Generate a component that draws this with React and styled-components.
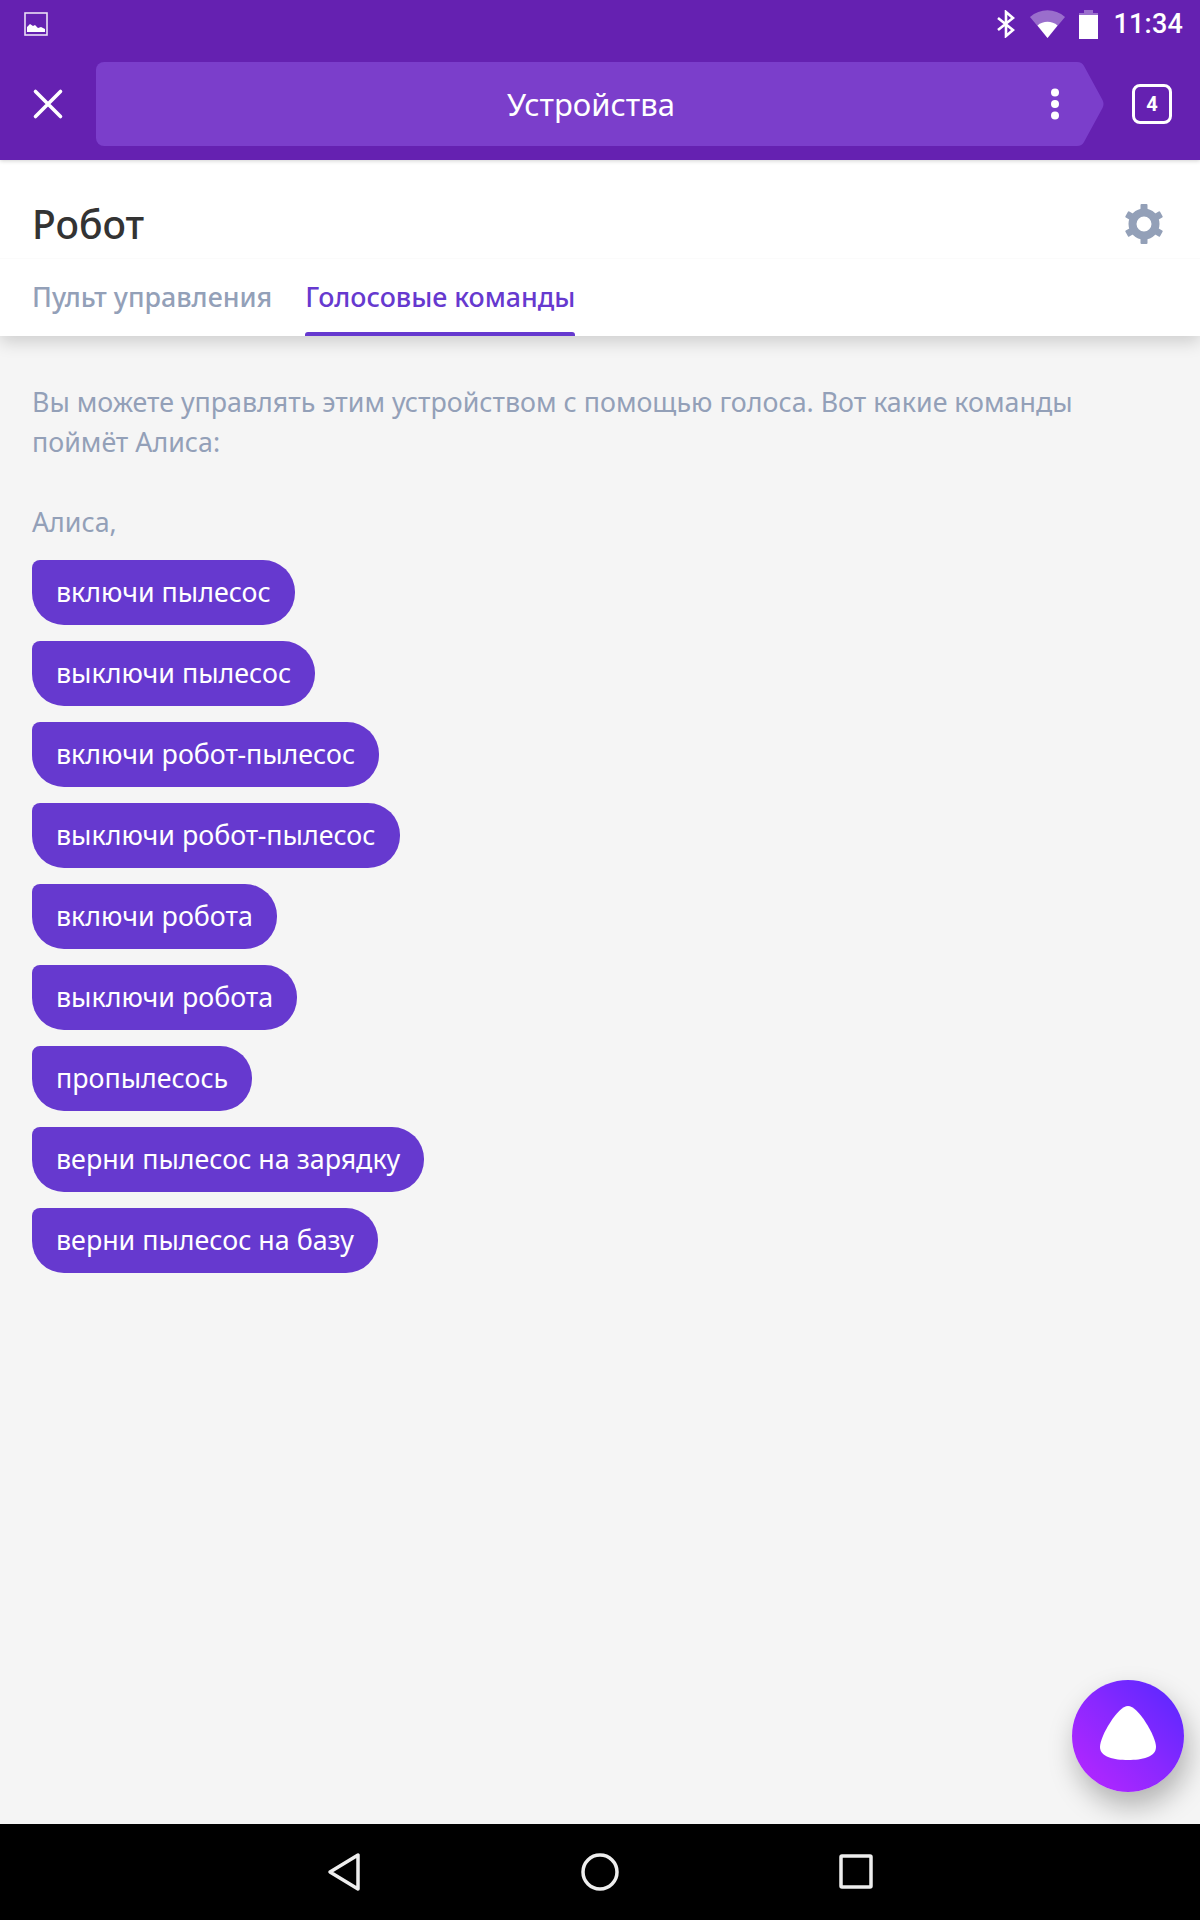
import styled, { createGlobalStyle } from "styled-components";

const GlobalStyle = createGlobalStyle`
  html, body {
    margin: 0;
    padding: 0;
    background: #f5f5f5;
  }
  * {
    box-sizing: border-box;
  }
`;

const Screen = styled.div`
  width: 1200px;
  height: 1920px;
  display: flex;
  flex-direction: column;
  font-family: "Noto Sans", "Open Sans", sans-serif;
  overflow: hidden;
`;

const Header = styled.header`
  height: 160px;
  flex-shrink: 0;
  background: #6521b1;
  display: flex;
  flex-direction: column;
  position: relative;
  z-index: 2;
  box-shadow: 0 1px 4px rgba(0, 0, 0, 0.18);
`;

const StatusBar = styled.div`
  height: 62px;
  padding: 10px 17px 0 24px;
  display: flex;
  align-items: flex-start;
  color: #fff;
`;

const StatusIcons = styled.div`
  margin-left: auto;
  display: flex;
  align-items: flex-start;
`;

const StatusIcon = styled.svg`
  display: block;
  margin-right: ${(props) => props.$gap || 0}px;
`;

const Time = styled.span`
  font-family: Roboto, sans-serif;
  font-size: 27px;
  font-weight: 500;
  line-height: 28px;
  letter-spacing: 0.2px;
`;

const Toolbar = styled.div`
  height: 84px;
  display: flex;
  align-items: center;
`;

const CloseButton = styled.div`
  width: 96px;
  height: 84px;
  display: flex;
  align-items: center;
  padding-left: 32px;
`;

const AddressBar = styled.div`
  flex: 1;
  height: 84px;
  padding-right: 14px;
  background: #7b3ecb;
  border-radius: 8px 0 0 8px;
  display: flex;
  align-items: center;
  justify-content: flex-end;
  position: relative;
`;

const AddressTitle = styled.div`
  position: absolute;
  left: 12px;
  right: 0;
  text-align: center;
  color: #fff;
  font-size: 31px;
  line-height: 84px;
`;

const TabCounter = styled.div`
  width: 40px;
  height: 40px;
  margin: 0 28px 0 28px;
  border: 3px solid #fff;
  border-radius: 8px;
  color: #fff;
  font-family: Roboto, sans-serif;
  font-size: 20px;
  font-weight: 700;
  display: flex;
  align-items: center;
  justify-content: center;
`;

const Panel = styled.section`
  height: 176px;
  flex-shrink: 0;
  background: #fff;
  box-shadow: 0 6px 16px rgba(0, 0, 0, 0.16);
  position: relative;
  z-index: 1;
`;

const TitleRow = styled.div`
  height: 99px;
  padding: 29px 36px 0 32px;
  display: flex;
  align-items: center;
  justify-content: space-between;
  border-bottom: 1px solid #fbfbfb;
`;

const Title = styled.h1`
  margin: 0;
  color: #333;
  font-size: 39px;
  font-weight: 500;
  line-height: 44px;
`;

const Tabs = styled.div`
  display: flex;
  gap: 33px;
  padding-left: 32px;
  height: 77px;
`;

const Tab = styled.div`
  height: 77px;
  padding-top: 20px;
  font-size: 26.8px;
  font-weight: 500;
  line-height: 36px;
  color: ${(props) => (props.$active ? "#6639cf" : "#93a0b8")};
  position: relative;

  &::after {
    content: "";
    display: ${(props) => (props.$active ? "block" : "none")};
    position: absolute;
    left: 0;
    right: 0;
    bottom: 0;
    height: 4px;
    background: #6639cf;
    border-radius: 3px 3px 0 0;
  }
`;

const Content = styled.main`
  flex: 1;
  background: #f5f5f5;
  padding: 46px 32px 0;
  position: relative;
`;

const Hint = styled.p`
  margin: 0;
  color: #93a0b8;
  font-size: 26.8px;
  line-height: 40px;
`;

const Lead = styled(Hint)`
  margin-top: 40px;
`;

const Commands = styled.div`
  margin-top: 18px;
  display: flex;
  flex-direction: column;
  align-items: flex-start;
  gap: 16px;
`;

const Command = styled.div`
  height: 65px;
  padding: 0 24px;
  background: #6639cf;
  color: #fff;
  font-size: 26.8px;
  line-height: 63px;
  border-radius: 8px 32px 32px 32px;
  white-space: nowrap;
`;

const AliceButton = styled.div`
  position: absolute;
  right: 16px;
  bottom: 32px;
  width: 112px;
  height: 112px;
  border-radius: 50%;
  background: linear-gradient(225deg, #5428ff 0%, #8a28ff 50%, #bb26ff 100%);
  box-shadow: 4px 14px 28px rgba(0, 0, 0, 0.28);
`;

const NavBar = styled.nav`
  height: 96px;
  flex-shrink: 0;
  background: #000;
  display: flex;
  justify-content: center;
  padding-top: 28px;
`;

const NavItem = styled.div`
  width: 256px;
  display: flex;
  justify-content: center;
`;

const commands = [
  "включи пылесос",
  "выключи пылесос",
  "включи робот-пылесос",
  "выключи робот-пылесос",
  "включи робота",
  "выключи робота",
  "пропылесось",
  "верни пылесос на зарядку",
  "верни пылесос на базу",
];

function GearIcon() {
  return (
    <svg width="40" height="40" viewBox="0 0 40 40" fill="#93a0b8">
      {[0, 60, 120, 180, 240, 300].map((angle) => (
        <rect key={angle} x="16.5" y="0" width="7" height="10" rx="1" transform={`rotate(${angle} 20 20)`} />
      ))}
      <circle cx="20" cy="20" r="11.5" fill="none" stroke="#93a0b8" strokeWidth="8" />
    </svg>
  );
}

export default function App() {
  return (
    <Screen>
      <GlobalStyle />
      <Header>
        <StatusBar>
          <svg width="24" height="24" viewBox="0 0 24 24" style={{ marginTop: 2 }}>
            <rect x="1" y="1" width="22" height="22" fill="none" stroke="#eadff5" strokeWidth="1.6" />
            <path d="M3 20v-5l3-3 3 2 2-1 3 3 3-1 4 2v3z" fill="#fff" />
          </svg>
          <StatusIcons>
            <StatusIcon $gap={15} width="18" height="28" viewBox="0 0 18 28" fill="none" stroke="#fff" strokeWidth="2.6">
              <path d="M1 8l15 12-7 6V2l7 6L1 20" />
            </StatusIcon>
            <StatusIcon $gap={14} width="35" height="28" viewBox="0 0 35 28">
              <path d="M0 7C10-2 25-2 35 7L17.5 28z" fill="#fff" fillOpacity="0.35" />
              <path d="M7.5 15.5C13 10.5 22 10.5 27.5 15.5L17.5 28z" fill="#fff" />
            </StatusIcon>
            <StatusIcon $gap={15} width="19" height="29" viewBox="0 0 19 29">
              <path d="M0 3h5V0h9v3h5v5H0z" fill="#fff" fillOpacity="0.35" />
              <rect y="5" width="19" height="24" fill="#fff" />
            </StatusIcon>
            <Time>11:34</Time>
          </StatusIcons>
        </StatusBar>
        <Toolbar>
          <CloseButton>
            <svg width="32" height="32" viewBox="0 0 32 32" stroke="#fff" strokeWidth="3.6" strokeLinecap="round">
              <path d="M3.5 3.5l25 25M28.5 3.5l-25 25" />
            </svg>
          </CloseButton>
          <AddressBar>
            <AddressTitle>Устройства</AddressTitle>
            <svg width="10" height="32" viewBox="0 0 10 32" fill="#fff" style={{ position: "relative" }}>
              <circle cx="5" cy="4.5" r="4" />
              <circle cx="5" cy="16" r="4" />
              <circle cx="5" cy="27.5" r="4" />
            </svg>
          </AddressBar>
          <svg width="30" height="84" viewBox="0 0 30 84" fill="#7b3ecb">
            <path d="M0 0H3Q8 0 10 4L28.5 38Q30.5 42 28.5 46L10 80Q8 84 3 84H0Z" />
          </svg>
          <TabCounter>4</TabCounter>
        </Toolbar>
      </Header>
      <Panel>
        <TitleRow>
          <Title>Робот</Title>
          <GearIcon />
        </TitleRow>
        <Tabs>
          <Tab>Пульт управления</Tab>
          <Tab $active>Голосовые команды</Tab>
        </Tabs>
      </Panel>
      <Content>
        <Hint>Вы можете управлять этим устройством с помощью голоса. Вот какие команды поймёт Алиса:</Hint>
        <Lead>Алиса,</Lead>
        <Commands>
          {commands.map((text) => (
            <Command key={text}>{text}</Command>
          ))}
        </Commands>
        <AliceButton>
          <svg width="112" height="112" viewBox="0 0 112 112" fill="#fff">
            <path d="M56 26C66 26 84 56 84 67C84 77 70 80 56 80C42 80 28 77 28 67C28 56 46 26 56 26Z" />
          </svg>
        </AliceButton>
      </Content>
      <NavBar>
        <NavItem>
          <svg width="34" height="40" viewBox="0 0 34 40" fill="none" stroke="#eee" strokeWidth="3.5" strokeLinejoin="round">
            <path d="M3 20L31 3V37Z" />
          </svg>
        </NavItem>
        <NavItem>
          <svg width="40" height="40" viewBox="0 0 40 40" fill="none" stroke="#eee" strokeWidth="3.5">
            <circle cx="20" cy="20" r="17" />
          </svg>
        </NavItem>
        <NavItem>
          <svg width="34" height="40" viewBox="0 0 34 40" fill="none" stroke="#eee" strokeWidth="3.5" strokeLinejoin="round">
            <rect x="2" y="4" width="30" height="31" rx="1" />
          </svg>
        </NavItem>
      </NavBar>
    </Screen>
  );
}
